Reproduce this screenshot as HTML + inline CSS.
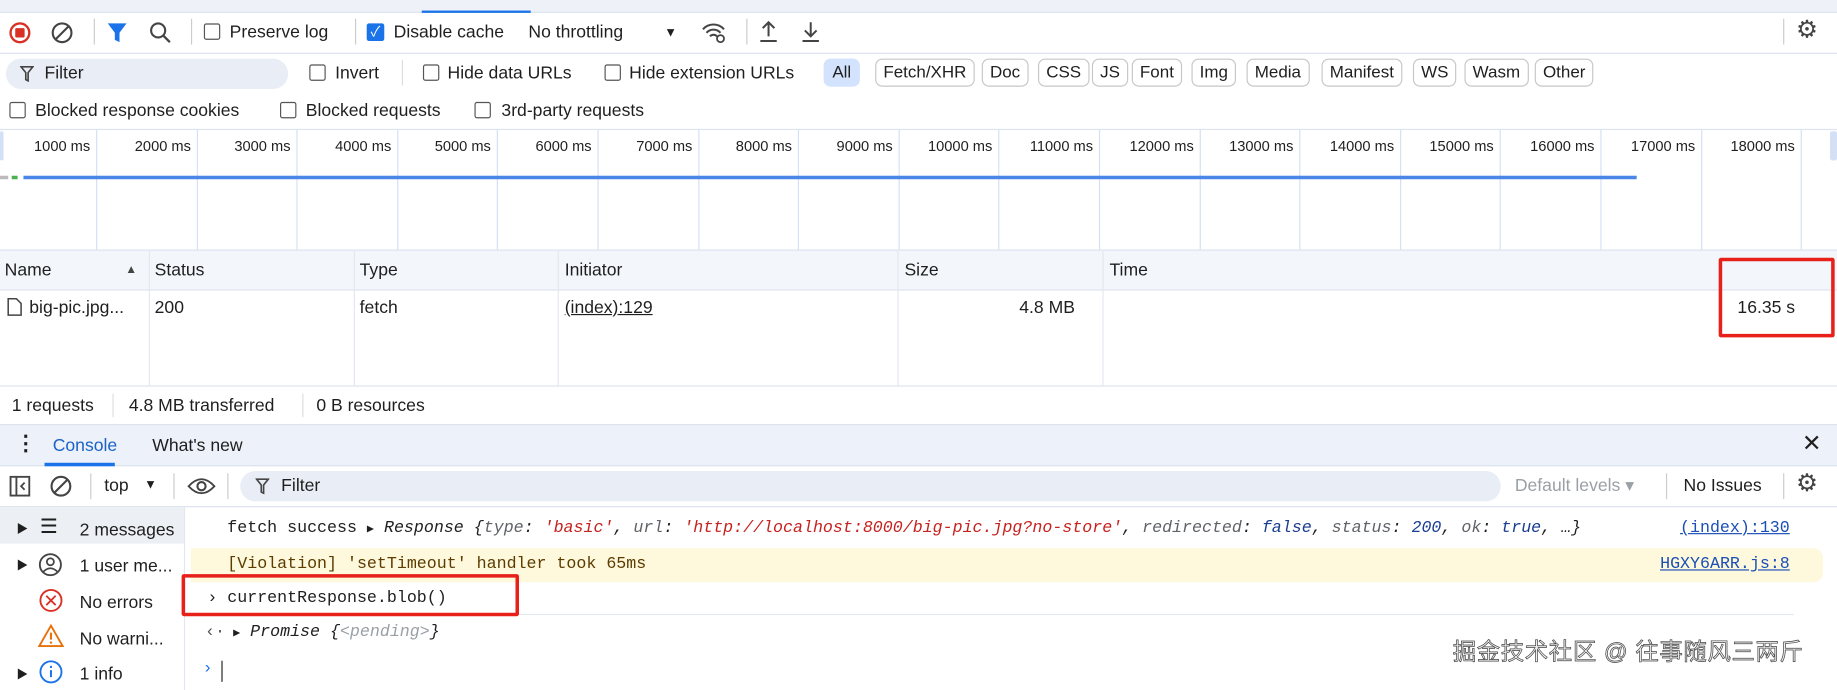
<!DOCTYPE html>
<html><head><meta charset="utf-8"><style>
*{box-sizing:border-box;margin:0;padding:0}
html,body{width:1837px;height:690px;overflow:hidden;background:#fff}
#w{position:absolute;left:0;top:0;width:1568px;height:589px;transform:scale(1.17156);transform-origin:0 0;font-family:"Liberation Sans","Noto Sans CJK SC",sans-serif;font-size:15px;color:#1f1f1f}
.a{position:absolute;white-space:nowrap;line-height:21px}
.cb{position:absolute;width:14px;height:14px;border:1.5px solid #555;border-radius:2px}
.hl{position:absolute;height:1px;background:#dde3ee}
.vl{position:absolute;width:1px;background:#d3e0f5}
.chip{position:absolute;top:50px;height:24px;border:1px solid #c7c7c7;border-radius:6px;padding:0 6px;line-height:22px;font-size:14.5px}
.mono{font-family:"Liberation Mono",monospace;font-size:14.2px}
.cl{position:absolute;width:1px;background:#e3e8f0}
</style></head><body><div id="w">
<div class="a" style="left:0;top:0;width:1568px;height:11px;background:#eef1f8;border-bottom:1px solid #dde3ee"></div>
<div class="a" style="left:360px;top:9px;width:93px;height:2px;background:#1a73e8"></div>
<svg class="a" style="left:7px;top:18px" width="20" height="20"><circle cx="10" cy="10" r="8" fill="none" stroke="#d93025" stroke-width="2"/><rect x="6" y="6" width="8" height="8" rx="1" fill="#d93025"/></svg>
<svg class="a" style="left:43px;top:18px" width="20" height="20"><circle cx="10" cy="10" r="8" fill="none" stroke="#444" stroke-width="1.8"/><line x1="4.5" y1="15.5" x2="15.5" y2="4.5" stroke="#444" stroke-width="1.8"/></svg>
<div class="a" style="left:80px;top:16px;width:1px;height:22px;background:#ccc"></div>
<svg class="a" style="left:91px;top:18px" width="18" height="20"><path d="M1 2h16l-6 8v8l-4-2v-6z" fill="#1a73e8"/></svg>
<svg class="a" style="left:127px;top:18px" width="20" height="20"><circle cx="8" cy="8" r="6" fill="none" stroke="#444" stroke-width="1.8"/><line x1="12" y1="12" x2="18" y2="18" stroke="#444" stroke-width="2"/></svg>
<div class="a" style="left:163px;top:16px;width:1px;height:22px;background:#ccc"></div>
<div class="cb" style="left:174px;top:20px"></div><div class="a" style="left:196px;top:17px">Preserve log</div>
<div class="a" style="left:303px;top:16px;width:1px;height:22px;background:#ccc"></div>
<div class="a" style="left:313px;top:20px;width:15px;height:15px;background:#1a73e8;border-radius:2px;color:#fff;font-size:12px;line-height:15px;text-align:center">✓</div>
<div class="a" style="left:336px;top:17px">Disable cache</div>
<div class="a" style="left:451px;top:17px">No throttling</div>
<div class="a" style="left:567px;top:18px;font-size:11px">▼</div>
<svg class="a" style="left:598px;top:17px" width="24" height="22"><path d="M2 8a12 12 0 0 1 18 0M5 11a8 8 0 0 1 12 0M8 14a4 4 0 0 1 6 0" fill="none" stroke="#444" stroke-width="1.7"/><circle cx="17" cy="16" r="3" fill="none" stroke="#444" stroke-width="1.5"/></svg>
<div class="a" style="left:637px;top:16px;width:1px;height:22px;background:#ccc"></div>
<svg class="a" style="left:647px;top:17px" width="18" height="20"><path d="M9 14V2M4 7l5-5 5 5M2 18h14" fill="none" stroke="#444" stroke-width="1.7"/></svg>
<svg class="a" style="left:683px;top:17px" width="18" height="20"><path d="M9 2v12M4 9l5 5 5-5M2 18h14" fill="none" stroke="#444" stroke-width="1.7"/></svg>
<div class="a" style="left:1522px;top:16px;width:1px;height:22px;background:#ccc"></div>
<div class="a" style="left:1533px;top:15px;font-size:21px;color:#444">⚙</div>
<div class="hl" style="left:0;top:45px;width:1568px"></div>
<div class="a" style="left:5px;top:50px;width:241px;height:26px;background:#e9eef6;border-radius:13px"></div>
<svg class="a" style="left:17px;top:56px" width="12" height="14"><path d="M1 1h10l-4 5v7l-2-1V6z" fill="none" stroke="#444" stroke-width="1.4"/></svg>
<div class="a" style="left:38px;top:52px">Filter</div>
<div class="cb" style="left:264px;top:55px"></div><div class="a" style="left:286px;top:52px">Invert</div>
<div class="a" style="left:343px;top:51px;width:1px;height:22px;background:#ddd"></div>
<div class="cb" style="left:361px;top:55px"></div><div class="a" style="left:382px;top:52px">Hide data URLs</div>
<div class="cb" style="left:516px;top:55px"></div><div class="a" style="left:537px;top:52px">Hide extension URLs</div>
<div class="a" style="left:703px;top:50px;height:24px;width:31px;background:#d3e3fd;border-radius:6px;line-height:24px;text-align:center;font-size:14.5px">All</div>
<div class="chip" style="left:747px">Fetch/XHR</div>
<div class="chip" style="left:838px">Doc</div>
<div class="chip" style="left:886px">CSS</div>
<div class="chip" style="left:932px">JS</div>
<div class="chip" style="left:966px">Font</div>
<div class="chip" style="left:1017px">Img</div>
<div class="chip" style="left:1064px">Media</div>
<div class="chip" style="left:1128px">Manifest</div>
<div class="chip" style="left:1206px">WS</div>
<div class="chip" style="left:1250px">Wasm</div>
<div class="chip" style="left:1310px">Other</div>
<div class="cb" style="left:8px;top:87px"></div><div class="a" style="left:30px;top:84px">Blocked response cookies</div>
<div class="cb" style="left:239px;top:87px"></div><div class="a" style="left:261px;top:84px">Blocked requests</div>
<div class="cb" style="left:405px;top:87px"></div><div class="a" style="left:428px;top:84px">3rd-party requests</div>
<div class="hl" style="left:0;top:110px;width:1568px"></div>
<div class="a" style="left:0;top:112px;width:3px;height:25px;background:#d3e0f5;border-radius:2px"></div>
<div class="a" style="left:1562px;top:112px;width:6px;height:25px;background:#d3e0f5;border-radius:2px"></div>
<div id="tl"></div>
<div class="a" style="left:0;top:150px;width:7px;height:3px;background:#bbb"></div>
<div class="a" style="left:10px;top:150px;width:5px;height:3px;background:#4caf50"></div>
<div class="a" style="left:20px;top:150px;width:1377px;height:3px;background:#4a86e8"></div>
<div class="a" style="left:0;top:213px;width:1568px;height:35px;background:#f3f6fb;border-top:1px solid #dde3ee;border-bottom:1px solid #dde3ee"></div>
<div class="a" style="left:4px;top:220px">Name</div><div class="a" style="left:107px;top:220px;font-size:10px;color:#444">▲</div>
<div class="a" style="left:132px;top:220px">Status</div>
<div class="a" style="left:307px;top:220px">Type</div>
<div class="a" style="left:482px;top:220px">Initiator</div>
<div class="a" style="left:772px;top:220px">Size</div>
<div class="a" style="left:947px;top:220px">Time</div>
<div class="cl" style="left:127px;top:213px;height:116px"></div>
<div class="cl" style="left:302px;top:213px;height:116px"></div>
<div class="cl" style="left:476px;top:213px;height:116px"></div>
<div class="cl" style="left:766px;top:213px;height:116px"></div>
<div class="cl" style="left:941px;top:213px;height:116px"></div>
<svg class="a" style="left:6px;top:254px" width="13" height="16"><path d="M1 1h7l4 4v10H1z" fill="none" stroke="#444" stroke-width="1.3"/></svg>
<div class="a" style="left:25px;top:252px">big-pic.jpg...</div>
<div class="a" style="left:132px;top:252px">200</div>
<div class="a" style="left:307px;top:252px">fetch</div>
<div class="a" style="left:482px;top:252px;text-decoration:underline">(index):129</div>
<div class="a" style="left:870px;top:252px">4.8 MB</div>
<div class="a" style="left:1483px;top:252px">16.35 s</div>
<div class="a" style="left:1467px;top:220px;width:99px;height:68px;border:3px solid #e8201a;border-radius:2px"></div>
<div class="hl" style="left:0;top:329px;width:1568px"></div>
<div class="a" style="left:10px;top:336px">1 requests</div>
<div class="a" style="left:96px;top:336px;width:1px;height:20px;background:#ddd"></div>
<div class="a" style="left:110px;top:336px">4.8 MB transferred</div>
<div class="a" style="left:258px;top:336px;width:1px;height:20px;background:#ddd"></div>
<div class="a" style="left:270px;top:336px">0 B resources</div>
<div class="a" style="left:0;top:362px;width:1568px;height:36px;background:#edf1f9;border-top:1px solid #dde3ee;border-bottom:1px solid #dde3ee"></div>
<div class="a" style="left:13px;top:368px;font-size:18px;font-weight:bold">⋮</div>
<div class="a" style="left:45px;top:370px;color:#1a62c7">Console</div>
<div class="a" style="left:38px;top:395px;width:60px;height:3px;background:#1a73e8"></div>
<div class="a" style="left:130px;top:370px">What's new</div>
<div class="a" style="left:1538px;top:369px;font-size:20px">✕</div>
<svg class="a" style="left:8px;top:406px" width="18" height="18"><rect x="1" y="1" width="16" height="16" fill="none" stroke="#444" stroke-width="1.6"/><line x1="6" y1="1" x2="6" y2="17" stroke="#444" stroke-width="1.6"/><path d="M13 6l-3 3 3 3" fill="none" stroke="#444" stroke-width="1.5"/></svg>
<svg class="a" style="left:42px;top:405px" width="20" height="20"><circle cx="10" cy="10" r="8" fill="none" stroke="#444" stroke-width="1.8"/><line x1="4.5" y1="15.5" x2="15.5" y2="4.5" stroke="#444" stroke-width="1.8"/></svg>
<div class="a" style="left:77px;top:404px;width:1px;height:22px;background:#ccc"></div>
<div class="a" style="left:89px;top:404px">top</div><div class="a" style="left:123px;top:404px;font-size:11px">▼</div>
<div class="a" style="left:148px;top:404px;width:1px;height:22px;background:#ccc"></div>
<svg class="a" style="left:160px;top:405px" width="24" height="20"><path d="M1 10q11-12 22 0q-11 12-22 0z" fill="none" stroke="#444" stroke-width="1.6"/><circle cx="12" cy="10" r="3.5" fill="none" stroke="#444" stroke-width="1.8"/></svg>
<div class="a" style="left:194px;top:404px;width:1px;height:22px;background:#ccc"></div>
<div class="a" style="left:205px;top:402px;width:1076px;height:26px;background:#e9eef6;border-radius:13px"></div>
<svg class="a" style="left:218px;top:408px" width="12" height="14"><path d="M1 1h10l-4 5v7l-2-1V6z" fill="none" stroke="#444" stroke-width="1.4"/></svg>
<div class="a" style="left:240px;top:404px">Filter</div>
<div class="a" style="left:1293px;top:404px;color:#9aa0a6">Default levels ▾</div>
<div class="a" style="left:1422px;top:404px;width:1px;height:22px;background:#ccc"></div>
<div class="a" style="left:1437px;top:404px">No Issues</div>
<div class="a" style="left:1522px;top:404px;width:1px;height:22px;background:#ccc"></div>
<div class="a" style="left:1533px;top:402px;font-size:21px;color:#444">⚙</div>
<div class="hl" style="left:0;top:432px;width:1568px"></div>
<div class="a" style="left:0;top:433px;width:157px;height:31px;background:#eceff3"></div>
<div class="a" style="left:157px;top:433px;width:1px;height:156px;background:#e3e8f0"></div>
<div class="a" style="left:14px;top:442px;font-size:10px">▶</div><div class="a" style="left:34px;top:439px;font-size:17px">☰</div><div class="a" style="left:68px;top:442px">2 messages</div>
<div class="a" style="left:14px;top:473px;font-size:10px">▶</div>
<svg class="a" style="left:32px;top:471px" width="22" height="22"><circle cx="11" cy="11" r="9" fill="none" stroke="#444" stroke-width="1.6"/><circle cx="11" cy="8.5" r="3" fill="none" stroke="#444" stroke-width="1.5"/><path d="M5 17q6-6 12 0" fill="none" stroke="#444" stroke-width="1.5"/></svg>
<div class="a" style="left:68px;top:473px">1 user me...</div>
<svg class="a" style="left:33px;top:502px" width="21" height="21"><circle cx="10.5" cy="10.5" r="9" fill="none" stroke="#d93025" stroke-width="1.6"/><path d="M6.5 6.5l8 8M14.5 6.5l-8 8" stroke="#d93025" stroke-width="1.6"/></svg>
<div class="a" style="left:68px;top:504px">No errors</div>
<svg class="a" style="left:32px;top:532px" width="23" height="21"><path d="M11.5 2L21.5 19.5H1.5z" fill="none" stroke="#e8710a" stroke-width="1.6"/><path d="M11.5 8v6" stroke="#e8710a" stroke-width="1.8"/><circle cx="11.5" cy="16.5" r="1" fill="#e8710a"/></svg>
<div class="a" style="left:68px;top:535px">No warni...</div>
<div class="a" style="left:14px;top:566px;font-size:10px">▶</div>
<svg class="a" style="left:33px;top:563px" width="21" height="21"><circle cx="10.5" cy="10.5" r="9" fill="none" stroke="#1a73e8" stroke-width="1.6"/><path d="M10.5 9v6" stroke="#1a73e8" stroke-width="1.7"/><circle cx="10.5" cy="6.3" r="1" fill="#1a73e8"/></svg>
<div class="a" style="left:68px;top:565px">1 info</div>
<div class="a mono" style="left:194px;top:441px">fetch success <span style="font-size:10px">▶</span> <i>Response</i> <i>{<span style="color:#5f6368">type</span>: <span style="color:#c5221f">'basic'</span>, <span style="color:#5f6368">url</span>: <span style="color:#c5221f">'http://localhost:8000/big-pic.jpg?no-store'</span>, <span style="color:#5f6368">redirected</span>: <span style="color:#1a3d8f">false</span>, <span style="color:#5f6368">status</span>: <span style="color:#1a3d8f">200</span>, <span style="color:#5f6368">ok</span>: <span style="color:#1a3d8f">true</span>, …}</i></div>
<div class="a mono" style="left:1434px;top:441px;color:#1a4fb5;text-decoration:underline">(index):130</div>
<div class="a" style="left:163px;top:468px;width:1393px;height:29px;background:#fef8dc;border-radius:0 8px 8px 0"></div>
<div class="a mono" style="left:194px;top:472px;color:#5c3c00">[Violation] 'setTimeout' handler took 65ms</div>
<div class="a mono" style="left:1417px;top:472px;color:#1a4fb5;text-decoration:underline">HGXY6ARR.js:8</div>
<div class="a mono" style="left:177px;top:501px">›</div>
<div class="a mono" style="left:194px;top:501px">currentResponse.blob()</div>
<div class="a" style="left:155px;top:490px;width:288px;height:36px;border:3px solid #e8201a;border-radius:2px"></div>
<div class="hl" style="left:443px;top:524px;width:1088px;background:#e3e8f0"></div>
<div class="a mono" style="left:175px;top:530px;color:#555">‹·</div>
<div class="a mono" style="left:199px;top:530px"><span style="font-size:10px">▶</span> <i>Promise {<span style="color:#9aa0a6">&lt;pending&gt;</span>}</i></div>
<div class="a mono" style="left:173px;top:561px;color:#1a73e8">›</div>
<div class="a" style="left:189px;top:564px;width:1px;height:18px;background:#222"></div>
<div class="a" style="left:1240px;top:547px;font-size:20px;color:#eee;-webkit-text-stroke:0.6px #444;letter-spacing:0.5px">掘金技术社区 @ 往事随风三两斤</div>
</div>
<script>
var t=document.getElementById('tl'),h='';
for(var i=1;i<=18;i++){var x=Math.round(82+(i-1)*85.6);h+='<div class="vl" style="left:'+x+'px;top:111px;height:102px"></div><div class="a" style="left:'+(x-200)+'px;width:195px;text-align:right;top:115px;font-size:12.5px">'+(i*1000)+' ms</div>';}
t.outerHTML=h;
</script>
</body></html>
